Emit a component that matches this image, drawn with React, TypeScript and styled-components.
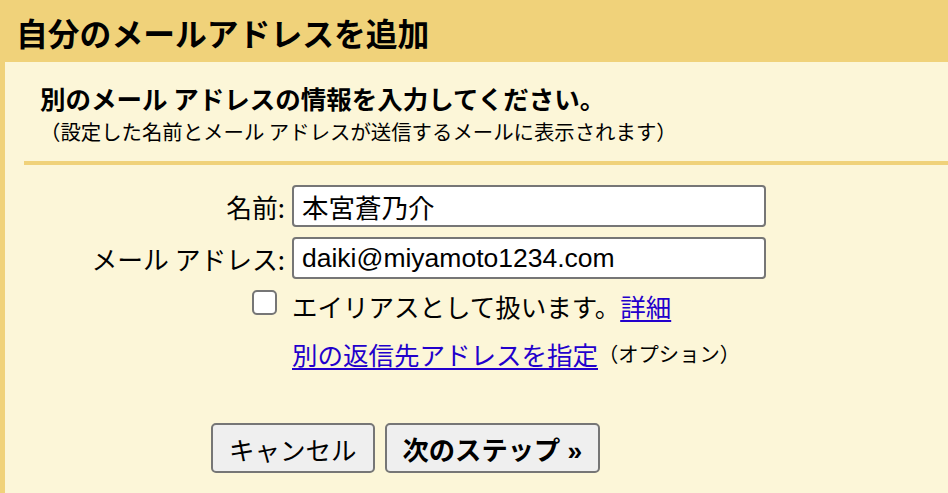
import React from "react";
import styled, { createGlobalStyle } from "styled-components";

const Global = createGlobalStyle`
  html, body { margin: 0; padding: 0; }
  body {
    background: #f0d27a;
    font-family: "Liberation Sans", "Noto Sans CJK JP", sans-serif;
    color: #000;
  }
`;

const Page = styled.div`
  width: 948px;
  height: 493px;
  overflow: hidden;
  background: #f0d27a;
  display: flex;
  flex-direction: column;
`;

const Header = styled.h1`
  margin: 0;
  height: 62px;
  padding: 4px 0 0 16px;
  box-sizing: border-box;
  display: flex;
  align-items: center;
  font-family: "Noto Sans CJK JP", sans-serif;
  font-size: 31.8px;
  font-weight: 700;
  line-height: 1;
`;

const Panel = styled.div`
  flex: 1;
  margin-left: 5px;
  background: #fcf6d8;
  padding-top: 21px;
`;

const Intro = styled.div`
  padding-left: 35px;
`;

const Heading = styled.div`
  font-family: "Noto Sans CJK JP", sans-serif;
  font-size: 25.5px;
  font-weight: 700;
  line-height: 30px;
`;

const Sub = styled.div`
  font-family: "Noto Sans CJK JP", sans-serif;
  font-size: 20.4px;
  line-height: 24px;
  margin-top: 6px;
`;

const Separator = styled.div`
  height: 4px;
  background: #f0d27a;
  margin: 18px 0 0 19px;
`;

const Form = styled.div`
  display: grid;
  grid-template-columns: 280px 474px;
  column-gap: 7px;
  margin-top: 20px;
`;

const Label = styled.label`
  justify-self: end;
  align-self: center;
  font-size: 25.8px;
  font-family: "Noto Sans CJK JP", sans-serif;
  white-space: nowrap;
`;

const Input = styled.input`
  box-sizing: border-box;
  width: 474px;
  height: 42px;
  margin: 0;
  padding: 0 8px;
  border: 2px solid #767676;
  border-radius: 4px;
  background: #fff;
  font-family: "Liberation Sans", "Noto Sans CJK JP", sans-serif;
  font-size: 26.5px;
  color: #000;
  outline: none;
`;

const RowSpacer = styled.div<{ $mt: number }>`
  margin-top: ${(p) => p.$mt}px;
`;

const Check = styled.span`
  justify-self: end;
  align-self: center;
  margin: 3px 8px 0 0;
  width: 25px;
  height: 25px;
  box-sizing: border-box;
  border: 2px solid #767676;
  border-radius: 5px;
  background: #fff;
`;

const Line = styled.div<{ $mt: number }>`
  margin-top: ${(p) => p.$mt}px;
  height: 34px;
  display: flex;
  align-items: center;
  font-family: "Noto Sans CJK JP", sans-serif;
  font-size: 25.5px;
  white-space: nowrap;
`;

const Link = styled.a`
  color: #2200cc;
  text-decoration: underline;
  text-underline-offset: 3px;
  cursor: pointer;
`;

const Small = styled.span`
  font-size: 20.3px;
`;

const Buttons = styled.div`
  display: flex;
  gap: 10px;
  margin: 53px 0 0 206px;
`;

const Button = styled.button<{ $primary?: boolean }>`
  height: 50px;
  box-sizing: border-box;
  padding: 0 ${(p) => (p.$primary ? 16 : 16)}px;
  background: #efefef;
  border: 2px solid #767676;
  border-radius: 5px;
  font-family: "Liberation Sans", "Noto Sans CJK JP", sans-serif;
  font-size: ${(p) => (p.$primary ? 26.3 : 25.5)}px;
  font-weight: ${(p) => (p.$primary ? 700 : 400)};
  color: #000;
  cursor: pointer;
`;

export default function App() {
  return (
    <Page>
      <Global />
      <Header>自分のメールアドレスを追加</Header>
      <Panel>
        <Intro>
          <Heading>別のメール アドレスの情報を入力してください。</Heading>
          <Sub>（設定した名前とメール アドレスが送信するメールに表示されます）</Sub>
        </Intro>
        <Separator />
        <Form>
          <Label>名前:</Label>
          <Input defaultValue="本宮蒼乃介" />
          <RowSpacer $mt={10} />
          <RowSpacer $mt={10} />
          <Label>メール アドレス:</Label>
          <Input defaultValue="daiki@miyamoto1234.com" />
          <Check />
          <Line $mt={9}>
            エイリアスとして扱います。
            <Link>詳細</Link>
          </Line>
          <span />
          <Line $mt={14}>
            <Link>別の返信先アドレスを指定</Link>
            <Small>（オプション）</Small>
          </Line>
        </Form>
        <Buttons>
          <Button>キャンセル</Button>
          <Button $primary>次のステップ »</Button>
        </Buttons>
      </Panel>
    </Page>
  );
}
